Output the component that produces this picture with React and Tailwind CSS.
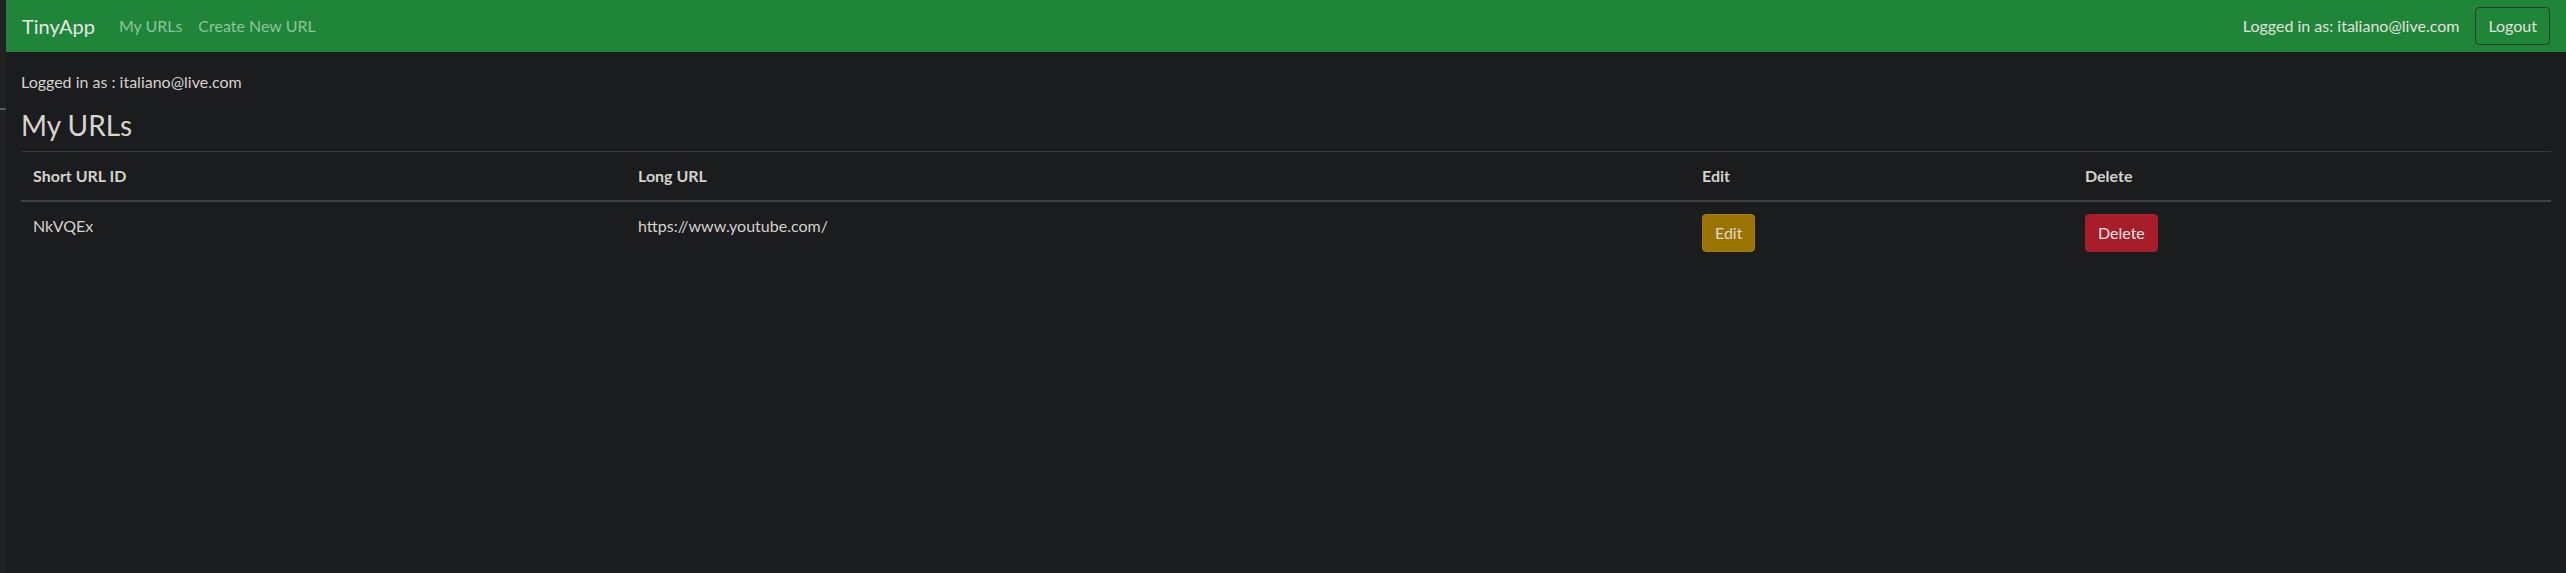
import React from 'react';

const urls = [
  { id: 'NkVQEx', longURL: 'https://www.youtube.com/' },
];

const font = { fontFamily: '"Segoe UI", Lato, "Noto Sans", sans-serif' };

const Navbar = ({ email }) => (
  <nav className="h-[52px] bg-[#1f8639] flex items-center px-4">
    <a className="text-[20px] leading-[30px] text-[#e8e6e3] mr-4">TinyApp</a>
    <div className="flex">
      <a className="px-2 text-[16px] leading-6 text-[#8fc39c]">My URLs</a>
      <a className="px-2 text-[16px] leading-6 text-[#8fc39c]">Create New URL</a>
    </div>
    <div className="ml-auto flex items-center">
      <span className="text-[16px] leading-6 text-[#e3e0dc]">Logged in as: {email}</span>
      <button className="ml-4 h-[38px] px-3 border border-[#2f3a33] rounded text-[16px] text-[#e3e0dc]">
        Logout
      </button>
    </div>
  </nav>
);

const UrlTable = ({ rows }) => (
  <table className="w-full border-collapse text-[16px] text-[#d5d1cc]">
    <colgroup>
      <col className="w-[605px]" />
      <col className="w-[1064px]" />
      <col className="w-[383px]" />
      <col />
    </colgroup>
    <thead>
      <tr className="border-t border-[#383b3e] border-b-2 border-b-[#3d4144]">
        <th className="text-left font-bold p-3 leading-6">Short URL ID</th>
        <th className="text-left font-bold p-3 leading-6">Long URL</th>
        <th className="text-left font-bold p-3 leading-6">Edit</th>
        <th className="text-left font-bold p-3 leading-6">Delete</th>
      </tr>
    </thead>
    <tbody>
      {rows.map((row) => (
        <tr key={row.id}>
          <td className="p-3 leading-6 align-top">{row.id}</td>
          <td className="p-3 leading-6 align-top">{row.longURL}</td>
          <td className="p-3 align-top">
            <button className="h-[38px] px-3 rounded bg-[#9a7400] border border-[#a77f06] text-[#ded9cf]">
              Edit
            </button>
          </td>
          <td className="p-3 align-top">
            <button className="h-[38px] px-3 rounded bg-[#a71d2a] border border-[#a71d2a] text-[#ece6e6]">
              Delete
            </button>
          </td>
        </tr>
      ))}
    </tbody>
  </table>
);

export default function App() {
  const email = 'italiano@live.com';
  return (
    <div className="min-h-screen flex bg-[#1b1c1e]" style={font}>
      <div className="w-[6px] bg-[#202122] flex flex-col">
        <div className="mt-[108px] h-[2px] bg-[#5a5a5a]" />
      </div>
      <div className="flex-1">
        <Navbar email={email} />
        <div className="px-[15px] pt-[18px]">
          <p className="text-[16px] leading-6 text-[#d5d1cc]">Logged in as : {email}</p>
          <h3 className="mt-[15px] mb-2 text-[28px] leading-[1.2] text-[#d8d4cf]">My URLs</h3>
          <UrlTable rows={urls} />
        </div>
      </div>
    </div>
  );
}
